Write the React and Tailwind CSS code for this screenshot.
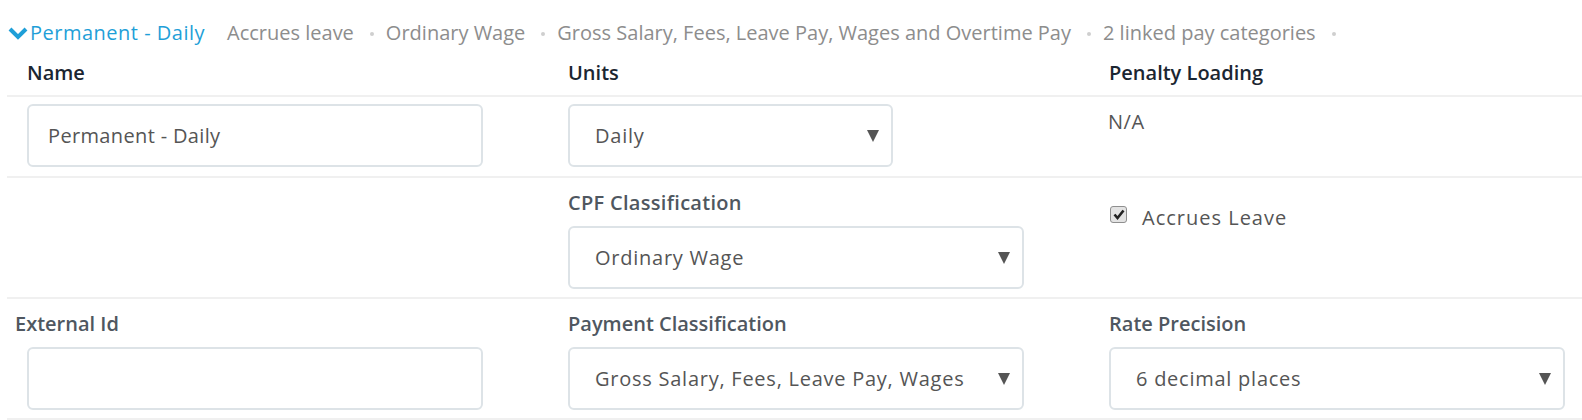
import React from 'react';

const font = { fontFamily: '"Open Sans", "Liberation Sans", sans-serif' };

// small triangle used by the fake selects
const Caret = () => (
  <svg width="12" height="12" viewBox="0 0 12 12" className="shrink-0">
    <polygon points="0,0 12,0 6,12" fill="#555" />
  </svg>
);

const TextBox = ({ value }) => (
  <div className="w-[456px] h-[63px] border-2 border-[#dde3e7] rounded-[6px] flex items-center pl-[19px] text-[20px] text-[#555] tracking-[0.35px]">
    {value}
  </div>
);

const Select = ({ value, width = 'w-[456px]' }) => (
  <div className={`${width} h-[63px] border-2 border-[#dde3e7] rounded-[6px] flex items-center justify-between pl-[25px] pr-[12px] text-[20px] text-[#555] tracking-[0.75px]`}>
    <span>{value}</span>
    <Caret />
  </div>
);

const meta = [
  'Accrues leave',
  'Ordinary Wage',
  'Gross Salary, Fees, Leave Pay, Wages and Overtime Pay',
  '2 linked pay categories',
];

export default function App() {
  return (
    <div className="w-[1582px] h-[420px] bg-white overflow-hidden" style={font}>
      {/* summary line */}
      <div className="flex items-center h-[30px] mt-[18px] text-[20px]">
        <svg width="20" height="14" viewBox="0 0 20 14" className="ml-[8px]">
          <polyline points="2,3 10,11 18,3" fill="none" stroke="#1f9fd8" strokeWidth="4" />
        </svg>
        <span className="text-[#1f9fd8] ml-[2px] mr-[22px] tracking-[0.5px]">Permanent - Daily</span>
        {meta.map((m) => (
          <span key={m} className="flex items-center text-[#8d8d8d]">
            {m}
            <span className="w-[4px] h-[4px] rounded-full bg-[#cfcfcf] ml-[16px] mr-[12px] mt-[2px]" />
          </span>
        ))}
      </div>

      <div className="ml-[7px]">
        {/* header labels */}
        <div className="grid grid-cols-[541px_541px_1fr] h-[49px] items-center text-[20px] font-semibold text-[#1b2631] border-b-2 border-[#f0f0f0]">
          <div className="pl-[20px] pt-[2px]">Name</div>
          <div className="pl-[20px] pt-[2px]">Units</div>
          <div className="pl-[20px] pt-[2px]">Penalty Loading</div>
        </div>

        {/* first row of inputs */}
        <div className="grid grid-cols-[541px_541px_1fr] pt-[7px] pb-[9px] border-b-2 border-[#f0f0f0]">
          <div className="pl-[20px]">
            <TextBox value="Permanent - Daily" />
          </div>
          <div className="pl-[20px]">
            <Select value="Daily" width="w-[325px]" />
          </div>
          <div className="pl-[19px] pt-[3px] text-[20px] text-[#555] tracking-[0.5px]">N/A</div>
        </div>

        {/* CPF row */}
        <div className="grid grid-cols-[541px_541px_1fr] pt-[12px] pb-[8px] border-b-2 border-[#f0f0f0]">
          <div />
          <div className="pl-[20px] flex flex-col gap-[10px]">
            <div className="text-[20px] font-semibold text-[#4f5760] h-[26px] leading-[26px] tracking-[0.3px]">CPF Classification</div>
            <Select value="Ordinary Wage" />
          </div>
          <div className="pl-[21px] pt-[13px] flex items-start gap-[15px]">
            <div className="w-[17px] h-[17px] mt-[3px] rounded-[3px] border border-[#8f8f8f] bg-[#e3e3e3] flex items-center justify-center">
              <svg width="12" height="11" viewBox="0 0 12 11">
                <polyline points="1.5,5.5 4.5,9 10.5,1.5" fill="none" stroke="#222" strokeWidth="2.6" />
              </svg>
            </div>
            <span className="text-[20px] text-[#555] tracking-[1px]">Accrues Leave</span>
          </div>
        </div>

        {/* bottom row */}
        <div className="grid grid-cols-[541px_541px_1fr] pt-[12px] pb-[8px] border-b-2 border-[#f0f0f0]">
          <div className="flex flex-col gap-[10px]">
            <div className="pl-[8px] text-[20px] font-semibold text-[#4f5760] h-[26px] leading-[26px]">External Id</div>
            <div className="pl-[20px]">
              <TextBox value="" />
            </div>
          </div>
          <div className="pl-[20px] flex flex-col gap-[10px]">
            <div className="text-[20px] font-semibold text-[#4f5760] h-[26px] leading-[26px]">Payment Classification</div>
            <Select value="Gross Salary, Fees, Leave Pay, Wages" />
          </div>
          <div className="pl-[20px] flex flex-col gap-[10px]">
            <div className="text-[20px] font-semibold text-[#4f5760] h-[26px] leading-[26px]">Rate Precision</div>
            <Select value="6 decimal places" />
          </div>
        </div>
      </div>
    </div>
  );
}
